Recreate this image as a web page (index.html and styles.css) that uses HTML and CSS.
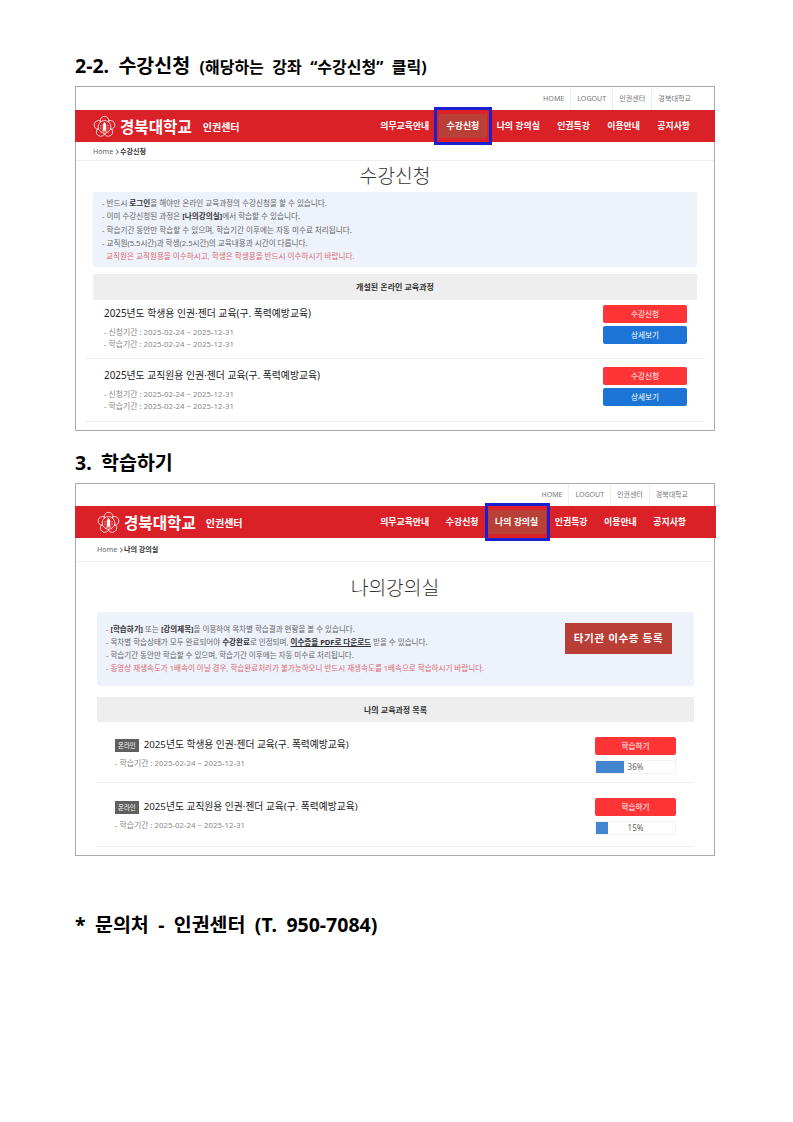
FILE: index.html
```
<!DOCTYPE html>
<html lang="ko">
<head>
    <meta charset="UTF-8">
    <meta name="viewport" content="width=device-width, initial-scale=1.0">
    <title>수강신청 안내</title>
    <link rel="stylesheet" href="styles.css">
</head>
<body>

    <!-- Flower emblem, used by both headers -->
    <svg class="defs" width="0" height="0">
        <symbol id="emblem" viewBox="0 0 24 24">
            <g fill="none" stroke="#fff" stroke-width="0.8">
                <circle cx="12" cy="6" r="4.6"/>
                <circle cx="18.2" cy="10.4" r="4.6"/>
                <circle cx="15.9" cy="17.6" r="4.6"/>
                <circle cx="8.1" cy="17.6" r="4.6"/>
                <circle cx="5.8" cy="10.4" r="4.6"/>
            </g>
            <circle cx="12" cy="12.4" r="6.6" fill="#da2128" stroke="#fff" stroke-width="0.8"/>
            <path d="M12 7.5 L10.6 10 V16 H13.4 V10 Z M9 16.8 H15" fill="#fff" stroke="#fff" stroke-width="0.7"/>
            <path d="M8.3 10.5 V15 M15.7 10.5 V15" stroke="#fff" stroke-width="0.7" stroke-dasharray="1 0.7"/>
        </symbol>
    </svg>

    <h1>2-2. 수강신청 <small>(해당하는 강좌 “수강신청” 클릭)</small></h1>

    <!-- Course registration -->
    <section class="shot apply">
        <div class="util">
            <span>HOME</span>
            <span>LOGOUT</span>
            <span>인권센터</span>
            <span>경북대학교</span>
        </div>
        <header>
            <svg class="logo"><use href="#emblem"/></svg>
            <strong class="univ">경북대학교</strong>
            <strong class="center">인권센터</strong>
            <nav>
                <span>의무교육안내</span>
                <span class="active">수강신청</span>
                <span>나의 강의실</span>
                <span>인권특강</span>
                <span>이용안내</span>
                <span>공지사항</span>
            </nav>
        </header>
        <div class="path">Home <i></i> <b>수강신청</b></div>
        <h2>수강신청</h2>
        <div class="info">
            <ul>
                <li>- 반드시 <b>로그인</b>을 해야만 온라인 교육과정의 수강신청을 할 수 있습니다.</li>
                <li>- 이미 수강신청된 과정은 <b>[나의강의실]</b>에서 학습할 수 있습니다.</li>
                <li>- 학습기간 동안만 학습할 수 있으며, 학습기간 이후에는 자동 미수료 처리됩니다.</li>
                <li>- 교직원(5.5시간)과 학생(2.5시간)의 교육내용과 시간이 다릅니다.</li>
                <li class="red indent">교직원은 교직원용을 이수하시고, 학생은 학생용을 반드시 이수하시기 바랍니다.</li>
            </ul>
        </div>
        <div class="bar">개설된 온라인 교육과정</div>
        <div class="row">
            <div class="course">
                <h3>2025년도 학생용 인권·젠더 교육(구. 폭력예방교육)</h3>
                <p>- 신청기간 : 2025-02-24 ~ 2025-12-31</p>
                <p>- 학습기간 : 2025-02-24 ~ 2025-12-31</p>
            </div>
            <div class="buttons">
                <a class="btn">수강신청</a>
                <a class="btn blue">상세보기</a>
            </div>
        </div>
        <div class="row">
            <div class="course">
                <h3>2025년도 교직원용 인권·젠더 교육(구. 폭력예방교육)</h3>
                <p>- 신청기간 : 2025-02-24 ~ 2025-12-31</p>
                <p>- 학습기간 : 2025-02-24 ~ 2025-12-31</p>
            </div>
            <div class="buttons">
                <a class="btn">수강신청</a>
                <a class="btn blue">상세보기</a>
            </div>
        </div>
    </section>

    <h1 class="second">3. 학습하기</h1>

    <!-- My classroom -->
    <section class="shot study">
        <div class="util">
            <span>HOME</span>
            <span>LOGOUT</span>
            <span>인권센터</span>
            <span>경북대학교</span>
        </div>
        <header>
            <svg class="logo"><use href="#emblem"/></svg>
            <strong class="univ">경북대학교</strong>
            <strong class="center">인권센터</strong>
            <nav>
                <span>의무교육안내</span>
                <span>수강신청</span>
                <span class="active">나의 강의실</span>
                <span>인권특강</span>
                <span>이용안내</span>
                <span>공지사항</span>
            </nav>
        </header>
        <div class="path">Home <i></i> <b>나의 강의실</b></div>
        <h2>나의강의실</h2>
        <div class="info">
            <ul>
                <li>- <b>[학습하기]</b> 또는 <b>[강의제목]</b>을 이용하여 목차별 학습결과 현황을 볼 수 있습니다.</li>
                <li>- 목차별 학습상태가 모두 완료되어야 <b>수강완료</b>로 인정되며, <b><u>이수증을 PDF로 다운로드</u></b> 받을 수 있습니다.</li>
                <li>- 학습기간 동안만 학습할 수 있으며, 학습기간 이후에는 자동 미수료 처리됩니다.</li>
                <li class="red">- 동영상 재생속도가 1배속이 아닐 경우, 학습완료처리가 불가능하오니 반드시 재생속도를 1배속으로 학습하시기 바랍니다.</li>
            </ul>
            <a class="register">타기관 이수증 등록</a>
        </div>
        <div class="bar">나의 교육과정 목록</div>
        <div class="row">
            <div class="course">
                <h3><span class="badge">온라인</span>2025년도 학생용 인권·젠더 교육(구. 폭력예방교육)</h3>
                <p>- 학습기간 : 2025-02-24 ~ 2025-12-31</p>
            </div>
            <div class="buttons">
                <a class="btn">학습하기</a>
                <div class="progress"><div class="fill" style="width: 36%"></div><span>36%</span></div>
            </div>
        </div>
        <div class="row">
            <div class="course">
                <h3><span class="badge">온라인</span>2025년도 교직원용 인권·젠더 교육(구. 폭력예방교육)</h3>
                <p>- 학습기간 : 2025-02-24 ~ 2025-12-31</p>
            </div>
            <div class="buttons">
                <a class="btn">학습하기</a>
                <div class="progress"><div class="fill" style="width: 15%"></div><span>15%</span></div>
            </div>
        </div>
    </section>

    <h1 class="contact">* 문의처 - 인권센터 (T. 950-7084)</h1>

</body>
</html>
```
FILE: styles.css
```
* {
    box-sizing: border-box;
}
body {
    margin: 0;
    padding: 52px 0 0 75px;
    height: 1122px;
    background: #fff;
    font-family: "Noto Sans", "Noto Sans CJK KR", sans-serif;
    color: #666;
    white-space: nowrap;
}
.defs {
    position: absolute;
}
h1 {
    margin: 0;
    height: 34px;
    line-height: 28px;
    font-size: 19.5px;
    font-weight: bold;
    color: #000;
    word-spacing: 4.3px;
}
h1 small {
    font-size: 16px;
}
.second {
    height: 52px;
    padding-top: 18px;
}
.contact {
    margin-top: 55px;
}

/* framed page */
.shot {
    width: 640px;
    border: 1px solid #aaa;
}
.apply {
    height: 345px;
}
.study {
    height: 373px;
}
.util {
    display: flex;
    justify-content: flex-end;
    height: 23px;
    padding-right: 17px;
    line-height: 23px;
    font-size: 7.1px;
    color: #777;
}
.util span {
    padding: 0 6px;
    border-left: 1px solid #f0f0f0;
}
.util span:first-child {
    border-left: none;
}
header {
    display: flex;
    align-items: center;
    height: 32px;
    margin: 0 -1px;
    padding: 0 25px 0 18px;
    background: #da2128;
    color: #fff;
}
.logo {
    width: 23px;
    height: 23px;
}
.univ {
    margin-left: 4px;
    font-size: 15.6px;
}
.center {
    margin-left: 11px;
    font-size: 10px;
}
nav {
    display: flex;
    gap: 17.4px;
    margin-left: auto;
    font-size: 8.9px;
    font-weight: bold;
}
nav span {
    line-height: 24px;
}
nav .active {
    position: relative;
    margin: 0 -8px;
    padding: 0 8px;
    background: #b94037;
}
/* blue marker round the current menu */
nav .active::after {
    content: "";
    position: absolute;
    inset: -7px -5px;
    border: 3px solid #1a1fd0;
}
.path {
    height: 19px;
    padding-left: 17px;
    border-bottom: 1px solid #eee;
    line-height: 18px;
    font-size: 7.1px;
}
.path i {
    display: inline-block;
    width: 4px;
    height: 4px;
    margin: 0 0.5px 0 -1.5px;
    border: solid #777;
    border-width: 1px 1px 0 0;
    transform: translateX(0.5px) scaleX(0.8) rotate(45deg);
}
.path b {
    color: #333;
}
h2 {
    margin: 0;
    height: 31px;
    line-height: 30px;
    font-size: 19.3px;
    font-weight: 300;
    text-align: center;
    color: #333;
}
.info {
    display: flex;
    justify-content: space-between;
    height: 75px;
    margin: 0 17px;
    padding: 5px 9px 0;
    border-radius: 3px;
    background: #edf2fb;
    font-size: 7.6px;
}
ul {
    margin: 0;
    padding: 0;
    list-style: none;
    line-height: 13.3px;
}
.info b {
    color: #333;
}
.info .red {
    color: #dc6a70;
}
.indent {
    padding-left: 4px;
}
.bar {
    height: 26px;
    margin: 7px 17px 0;
    background: #eee;
    line-height: 26px;
    font-size: 8px;
    font-weight: bold;
    text-align: center;
    color: #333;
}
.row {
    display: flex;
    justify-content: space-between;
    border-bottom: 1px solid #eee;
}
h3 {
    margin: 0;
    line-height: 16px;
    font-size: 9.85px;
    font-weight: normal;
    color: #222;
}
.course p {
    margin: 0;
    line-height: 12px;
    font-size: 7.85px;
    color: #888;
}
.btn {
    display: block;
    height: 18px;
    border-radius: 2px;
    background: #ff3437;
    line-height: 18px;
    font-size: 7.6px;
    text-align: center;
    color: #fff;
}
.blue {
    background: #1c75d6;
}

/* course registration */
.apply .row {
    height: 59px;
    margin: 0 9px;
    padding: 5px 18px 0 19px;
}
.apply .row:last-child {
    height: 63px;
    padding-top: 8px;
}
.apply h3 {
    margin-bottom: 5px;
}
.apply .buttons {
    display: grid;
    gap: 3px;
    align-content: start;
    width: 84px;
}

/* my classroom */
.study .util {
    height: 22px;
    line-height: 21px;
    padding-right: 20px;
    font-size: 7px;
}
.study header {
    margin-right: -2px;
    padding-left: 22px;
    padding-right: 30px;
}
.study .center {
    margin-left: 10px;
}
.study nav {
    gap: 16.6px;
}
.study nav .active {
    margin: 0 -8px 0 -7px;
    padding: 0 8px 0 7px;
}
.study nav .active::after {
    inset: -7px -4px -7px -3px;
}
.study .path {
    height: 24px;
    padding-left: 21px;
    line-height: 23px;
}
.study h2 {
    height: 50px;
    line-height: 52px;
}
.study .info {
    height: 74px;
    margin: 0 20px 0 21px;
    padding: 11px 22px 0 9px;
    font-size: 7.54px;
}
.study ul {
    line-height: 13.1px;
}
.register {
    width: 107px;
    height: 31px;
    background: #b93e35;
    line-height: 30px;
    font-size: 10.6px;
    font-weight: bold;
    letter-spacing: 0.6px;
    text-align: center;
    color: #fff;
}
.study .bar {
    height: 25px;
    margin: 11px 20px 0 21px;
    line-height: 25px;
}
.study .row {
    height: 61px;
    margin: 0 20px 0 21px;
    padding: 15px 18px 0;
}
.study .row:last-child {
    height: 64px;
}
.study .row:last-child .course {
    padding-top: 1px;
}
.study h3 {
    display: flex;
    align-items: center;
    margin-bottom: 4px;
    font-size: 9.75px;
}
.badge {
    height: 13px;
    margin-right: 5px;
    padding: 0 3px;
    background: #5f5f5f;
    line-height: 13px;
    font-size: 6.4px;
    color: #fff;
}
.study .buttons {
    width: 81px;
}
.progress {
    position: relative;
    height: 14px;
    margin-top: 5px;
    border: 1px solid #f2f2f2;
    line-height: 12px;
    font-size: 8px;
    text-align: center;
}
.fill {
    position: absolute;
    top: 0;
    left: 0;
    height: 100%;
    background: #4485d0;
}
.progress span {
    position: relative;
}
```
